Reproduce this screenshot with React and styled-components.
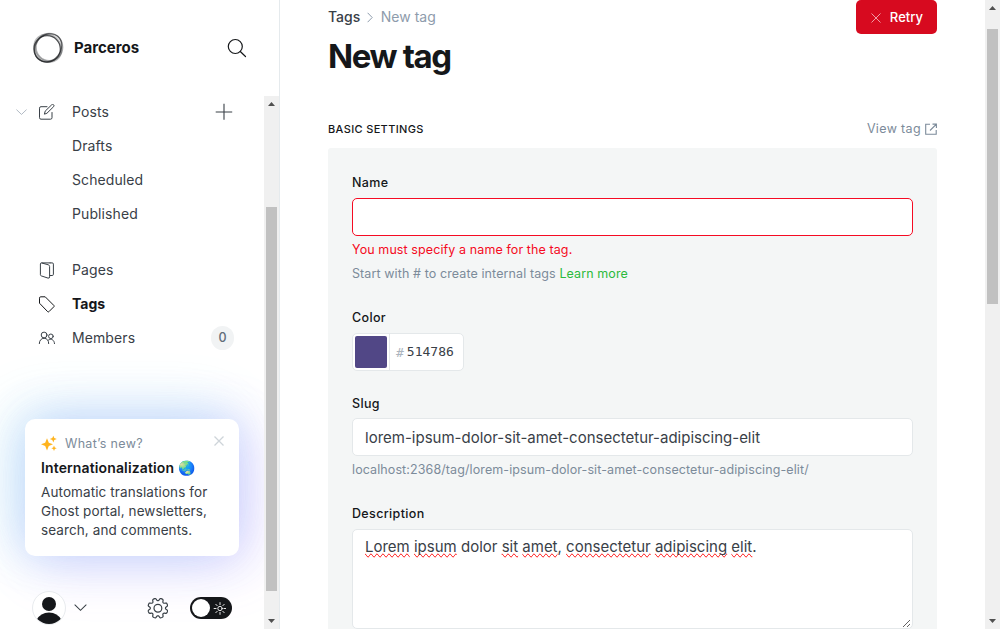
import React from 'react';
import styled, { createGlobalStyle } from 'styled-components';

const GlobalStyle = createGlobalStyle`
  *, *::before, *::after { box-sizing: border-box; }
  html, body, #root { height: 100%; }
  body {
    margin: 0;
    overflow: hidden;
    background: #fff;
    color: #15171a;
    font-family: Inter, "Liberation Sans", sans-serif;
    font-size: 14px;
    line-height: 20px;
  }
  svg { display: block; flex: none; }
`;

const Shell = styled.div`
  display: flex;
  width: 1000px;
  height: 629px;
  overflow: hidden;
`;

/* Scrollbars */
const Track = styled.div`
  flex: none;
  width: 15px;
  display: flex;
  flex-direction: column;
  background: #f0f0f0;
`;
const Arrow = styled.div`
  height: ${(p) => p.$h}px;
  flex: none;
  display: flex;
  align-items: center;
  justify-content: center;
`;
const Lane = styled.div`
  flex: 1;
  padding: ${(p) => p.$before}px 2px ${(p) => p.$after}px;
`;
const Thumb = styled.div`
  height: 100%;
  background: #c1c1c1;
`;

function Scrollbar({ before, after }) {
  return (
    <Track>
      <Arrow $h={16}>
        <svg width="7" height="4" viewBox="0 0 7 4"><path d="M0 4 3.500 0 7 4z" fill="#505050" /></svg>
      </Arrow>
      <Lane $before={before} $after={after}><Thumb /></Lane>
      <Arrow $h={16}>
        <svg width="7" height="4" viewBox="0 0 7 4"><path d="M0 0 3.500 4 7 0z" fill="#505050" /></svg>
      </Arrow>
    </Track>
  );
}

/* Sidebar */
const Sidebar = styled.aside`
  width: 280px;
  flex: none;
  display: flex;
  flex-direction: column;
  border-right: 1px solid #e5eaed;
`;
const SiteHeader = styled.header`
  height: 96px;
  flex: none;
  display: flex;
  align-items: center;
  padding: 0 32px 0 32px;
`;
const SiteName = styled.div`
  flex: 1;
  margin-left: 10px;
  font-size: 15px;
  font-weight: 700;
`;
const SidebarBody = styled.div`
  flex: 1;
  min-height: 0;
  display: flex;
`;
const NavColumn = styled.div`
  flex: 1;
  min-width: 0;
  display: flex;
  flex-direction: column;
  overflow: hidden;
`;
const NavList = styled.nav`
  display: flex;
  flex-direction: column;
  margin-top: ${(p) => p.$top}px;
  padding: 0 31px 0 16px;
`;
const NavItem = styled.a`
  height: 34px;
  display: grid;
  grid-template-columns: 22px 34px 1fr auto;
  align-items: center;
  font-size: 14px;
  letter-spacing: ${(p) => (p.$active ? '0' : '0.1px')};
  font-weight: ${(p) => (p.$active ? 700 : 400)};
  color: ${(p) => (p.$active ? '#15171a' : '#394047')};
`;
const Count = styled.span`
  width: 23px;
  height: 24px;
  margin-right: -1px;
  border-radius: 12px;
  background: #f1f3f4;
  color: #626d79;
  font-size: 12.5px;
  font-weight: 500;
  line-height: 24px;
  text-align: center;
  letter-spacing: 0;
`;

/* Announcement card */
const Toast = styled.section`
  flex: none;
  width: 214px;
  height: 137px;
  margin: auto 0 0 25px;
  padding: 14px 16px;
  border-radius: 10px;
  background: #fff;
  box-shadow:
    -12px -8px 60px 0 rgba(75, 225, 226, 0.2),
    12px 8px 60px 0 rgba(202, 103, 255, 0.2),
    0 0 46px 0 rgba(65, 120, 255, 0.21);
`;
const ToastTop = styled.div`
  display: flex;
  align-items: center;
  height: 20px;
  font-size: 12.5px;
  letter-spacing: 0.33px;
  color: #7c8b9a;
`;
const ToastLabel = styled.span`
  flex: 1;
  margin: 1px 0 0 8px;
`;
const ToastClose = styled.span`
  margin: -5px -1px 0 0;
`;
const ToastTitle = styled.h3`
  margin: 5px 0 4px;
  display: flex;
  gap: 4px;
  font-size: 14px;
  font-weight: 600;
  line-height: 20px;
  letter-spacing: 0.13px;
`;
const ToastText = styled.p`
  margin: 5px -4px 0 0;
  font-size: 13.5px;
  line-height: 19px;
  letter-spacing: 0.1px;
  color: #394047;
`;

const SidebarFooter = styled.footer`
  flex: none;
  height: 73px;
  display: flex;
  align-items: center;
  gap: 8px;
  padding: 31px 32px 0 32px;
`;
const Avatar = styled.div`
  width: 34px;
  height: 34px;
  border: 1px solid #e8ebee;
  border-radius: 50%;
  background: #fff;
  overflow: hidden;
`;
const FooterTools = styled.div`
  flex: 1;
  display: flex;
  justify-content: flex-end;
  align-items: center;
  gap: 22px;
`;
const Toggle = styled.div`
  width: 42px;
  height: 22px;
  padding: 2px 6px 2px 2px;
  border-radius: 11px;
  background: #15171a;
  display: flex;
  align-items: center;
  justify-content: space-between;
`;
const Knob = styled.div`
  width: 18px;
  height: 18px;
  border-radius: 50%;
  background: #fff;
`;

/* Main */
const Main = styled.main`
  flex: 1;
  min-width: 0;
  padding: 0 48px;
  overflow: hidden;
`;
const PageHeader = styled.header`
  display: flex;
  justify-content: space-between;
  align-items: flex-start;
  height: 119px;
`;
const Crumbs = styled.div`
  display: flex;
  align-items: center;
  height: 34px;
  font-size: 14px;
  font-weight: 500;
  color: #394047;
`;
const CrumbCurrent = styled.span`
  color: #8e9cac;
  font-weight: 400;
`;
const CrumbSep = styled.span`
  margin: 1px 7.5px 0 7px;
`;
const Title = styled.h1`
  margin: 1px 0 0;
  font-size: 33px;
  line-height: 42px;
  font-weight: 700;
  letter-spacing: -1.4px;
`;
const RetryButton = styled.button`
  width: 81px;
  height: 34px;
  padding: 0;
  border: 0;
  border-radius: 5px;
  background: #d70a1f;
  color: #fff;
  display: flex;
  align-items: center;
  justify-content: center;
  gap: 9px;
  padding: 1px 0 0 1px;
  font: 500 13px/33px Inter, sans-serif;
  letter-spacing: 0.05px;
`;
const SectionHead = styled.div`
  display: flex;
  justify-content: space-between;
  align-items: center;
  height: 20px;
  margin-bottom: 9px;
`;
const SectionTitle = styled.h4`
  margin: 0;
  font-size: 11px;
  font-weight: 450;
  letter-spacing: 0.35px;
`;
const ViewLink = styled.a`
  display: flex;
  align-items: center;
  gap: 4px;
  color: #7c8b9a;
  font-size: 12.5px;
  line-height: 18px;
  margin-top: -1px;
  letter-spacing: 0.35px;
`;
const Panel = styled.div`
  height: 600px;
  padding: 24px;
  border-radius: 3px;
  background: #f4f6f6;
`;
const Field = styled.div`
  height: ${(p) => p.$h}px;
`;
const Label = styled.div`
  height: ${(p) => (p.$tight ? 25 : 26)}px;
  font-size: 12.5px;
  font-weight: 500;
  line-height: 21px;
  letter-spacing: 0.35px;
`;
const Box = styled.div`
  height: ${(p) => p.$h || 38}px;
  padding: 0 12px;
  border: 1px solid ${(p) => (p.$error ? '#f50b23' : '#e4e8ea')};
  border-radius: 5px;
  background: #fff;
  font-size: 15px;
  line-height: ${(p) => (p.$h ? 34 : 37)}px;
  color: #394047;
`;
const AreaBox = styled(Box)`
  display: flex;
  justify-content: space-between;
  padding-right: 1px;
`;
const Grip = styled.div`
  align-self: flex-end;
`;
const Misspelt = styled.span`
  text-decoration-line: spelling-error;
`;
const Hint = styled.p`
  margin: ${(p) => p.$top}px 0 0;
  font-size: 12.5px;
  line-height: 20px;
  letter-spacing: 0.1px;
  color: ${(p) => (p.$error ? '#f50b23' : '#7c8b9a')};
`;
const HintLink = styled.a`
  color: #2bba3c;
`;
const ColorBox = styled.div`
  width: 112px;
  height: 38px;
  display: flex;
  align-items: center;
  border: 1px solid #e4e8ea;
  border-radius: 5px;
  background: #fff;
`;
const SwatchCell = styled.div`
  width: 37px;
  height: 36px;
  padding: 2px;
  border-right: 1px solid #e4e8ea;
`;
const Swatch = styled.div`
  width: 32px;
  height: 32px;
  border-radius: 2px;
  background: #514786;
`;
const Hash = styled.span`
  margin: 1px 3px 0 6px;
  font: 13px/20px "DejaVu Sans Mono", monospace;
  color: #abb4be;
`;
const Hex = styled.span`
  font: 13px/20px "DejaVu Sans Mono", monospace;
  color: #394047;
`;

const Logo = () => (
  <svg width="32" height="32" viewBox="0 0 32 32" fill="none" stroke="#15171a">
    <circle cx="15.100" cy="16.900" r="13.200" strokeWidth="1.200" strokeOpacity=".7" />
    <ellipse cx="17.300" cy="15.200" rx="13.300" ry="13.600" strokeWidth="1.500" strokeOpacity=".35" />
    <ellipse cx="16.300" cy="16" rx="15" ry="12.500" strokeWidth="1.200" strokeOpacity=".6" transform="rotate(-50 16 16)" />
    <ellipse cx="16" cy="16.300" rx="14.400" ry="12.800" strokeWidth="2" strokeOpacity=".3" transform="rotate(50 16 16)" />
  </svg>
);

const SearchIcon = () => (
  <svg width="20" height="20" viewBox="0 0 20 20" fill="none" stroke="#15171a" strokeWidth="1.200" strokeLinecap="round">
    <circle cx="8.300" cy="8.500" r="7" /><path d="m13.300 13.500 5.200 5" />
  </svg>
);

const ChevronDown = ({ w, color, sw = 1 }) => (
  <svg width={w} height={w / 2 + 1} viewBox="0 0 12 7" fill="none" stroke={color} strokeWidth={sw} strokeLinecap="round">
    <path d="m.8.9 5.200 5 5.200-5" />
  </svg>
);

const PencilIcon = () => (
  <svg width="17" height="17" viewBox="0 0 17 17" fill="none" stroke="#394047" strokeLinejoin="round" strokeLinecap="round">
    <path d="M9 2.700H3A1.500 1.500 0 0 0 1.500 4.200v9.500A1.500 1.500 0 0 0 3 15.200h9.500a1.500 1.500 0 0 0 1.500-1.500V8.500" />
    <path d="m6.500 9.800.7-2.700L13.700.8a1.200 1.200 0 0 1 1.900 1.900L9.200 9z" />
  </svg>
);

const PlusIcon = () => (
  <svg width="18" height="18" viewBox="0 0 18 18" stroke="#394047" strokeWidth="1.100"><path d="M9 .8v16M.7 9h16.500" /></svg>
);

const PagesIcon = () => (
  <svg width="17" height="17" viewBox="0 0 17 17" fill="none" stroke="#394047" strokeLinejoin="round">
    <path d="M3.500.9h9M3.500.9Q2.400.9 2.400 2v10.700q0 .9.9 1.200l6.700 2.200q1.600.4 1.600-1.200V4.500q0-1.300-1.300-1.700L3.500.9M11.700.9h2.500q1.200 0 1.200 1.200v10.200q0 1.200-1.200 1.200h-2.500" />
  </svg>
);

const TagIcon = () => (
  <svg width="17" height="17" viewBox="0 0 17 17" fill="none" stroke="#15171a" strokeLinejoin="round">
    <path d="M1.500 2.200Q1.500.8 2.700.8H7.200L15.900 9.500Q16.500 10.100 15.900 10.700L10.900 15.700Q10.300 16.300 9.700 15.700L1.500 7.200z" />
  </svg>
);

const MembersIcon = () => (
  <svg width="17" height="14" viewBox="0 0 17 14" fill="none" stroke="#394047" strokeLinecap="round">
    <circle cx="6.100" cy="4" r="2.900" /><circle cx="12.900" cy="5.300" r="2.300" />
    <path d="M1.300 12.600c0-3.200 2-5.300 4.800-5.300s4.600 2 4.600 5.300M10.500 9c2.700-1.800 5.800-.2 6 3.600" />
  </svg>
);

const Sparkles = () => (
  <svg width="16" height="16" viewBox="0 0 16 16" fill="#ffb41f">
    <path d="M6 3.300 7.800 7.700 12 9.300 7.800 11 6 15.500 4.200 11 0 9.300 4.200 7.700z" />
    <path d="m12.300.8 1 2.300 2.500 1-2.500 1-1 2.400-1-2.400-2.500-1 2.500-1z" />
    <path d="m13 10.600.8 1.900 1.900.8-1.900.8-.8 1.900-.8-1.900-1.900-.8 1.900-.8z" />
  </svg>
);

const Cross = ({ size, color, sw = 1 }) => (
  <svg width={size} height={size} viewBox="0 0 10 10" stroke={color} strokeWidth={sw}><path d="m.5.5 9 9M9.500.5l-9 9" /></svg>
);

const Person = () => (
  <svg width="32" height="32" viewBox="0 0 32 32" fill="#15171a">
    <circle cx="16" cy="12" r="7" />
    <path d="M3.500 28q4-7.500 12.500-7.500T28.500 28L24 33H8z" />
  </svg>
);

/* Eight-lobed outline with a notch at the top */
const gearPath = (() => {
  const steps = 96;
  const pts = [];
  for (let i = 0; i < steps; i += 1) {
    const a = (i / steps) * Math.PI * 2;
    const wave = Math.tanh(0.5 - 2.2 * Math.cos(8 * a));
    const r = 8.8 + 1.300 * wave;
    pts.push(`${(10.5 + r * Math.cos(a)).toFixed(2)} ${(10.5 + r * Math.sin(a)).toFixed(2)}`);
  }
  return `M${pts.join('L')}z`;
})();

const GearIcon = () => (
  <svg width="21" height="21" viewBox="0 0 21 21" fill="none" stroke="#394047" strokeWidth="1.200" strokeLinejoin="round">
    <circle cx="10.900" cy="10.200" r="3.900" />
    <path d={gearPath} transform="translate(.4 -.3)" />
  </svg>
);

const SunIcon = () => (
  <svg width="13" height="13" viewBox="0 0 13 13" fill="none" stroke="#fff" strokeWidth=".9" strokeLinecap="round">
    <circle cx="7" cy="6.500" r="2.200" />
    <path d="M7 .6v2M7 10.400v2M1.100 6.500h2M10.900 6.500h1.900M2.800 2.300l1.400 1.400M9.800 9.300l1.400 1.400M2.800 10.700l1.400-1.400M9.800 3.700l1.400-1.400" />
  </svg>
);

const ExternalIcon = () => (
  <svg width="12" height="12" viewBox="0 0 12 12" fill="none" stroke="#7c8b9a" strokeWidth="1.100">
    <path d="M5 1.300H.7v10h10.500V7M7.500 1.100h3.900v4M11.200 1.300 5 7.500" />
  </svg>
);

export default function App() {
  return (
    <>
      <GlobalStyle />
      <Shell>
        <Sidebar>
          <SiteHeader>
            <Logo />
            <SiteName>Parceros</SiteName>
            <SearchIcon />
          </SiteHeader>
          <SidebarBody>
            <NavColumn>
              <NavList $top={-1}>
                <NavItem><ChevronDown w={11} color="#abb4be" /><PencilIcon /><span>Posts</span><PlusIcon /></NavItem>
                <NavItem><i /><i /><span>Drafts</span></NavItem>
                <NavItem><i /><i /><span>Scheduled</span></NavItem>
                <NavItem><i /><i /><span>Published</span></NavItem>
              </NavList>
              <NavList $top={22}>
                <NavItem><i /><PagesIcon /><span>Pages</span></NavItem>
                <NavItem $active><i /><TagIcon /><span>Tags</span></NavItem>
                <NavItem><i /><MembersIcon /><span>Members</span><Count>0</Count></NavItem>
              </NavList>
              <Toast>
                <ToastTop>
                  <Sparkles />
                  <ToastLabel>What’s new?</ToastLabel>
                  <ToastClose><Cross size={10} color="#ced4d9" sw={1.3} /></ToastClose>
                </ToastTop>
                <ToastTitle>Internationalization <span>🌏</span></ToastTitle>
                <ToastText>Automatic translations for Ghost portal, newsletters, search, and comments.</ToastText>
              </Toast>
              <SidebarFooter>
                <Avatar><Person /></Avatar>
                <ChevronDown w={13} color="#394047" />
                <FooterTools>
                  <GearIcon />
                  <Toggle><Knob /><SunIcon /></Toggle>
                </FooterTools>
              </SidebarFooter>
            </NavColumn>
            <Scrollbar before={95} after={22} />
          </SidebarBody>
        </Sidebar>
        <Main>
          <PageHeader>
            <div>
              <Crumbs>
                <span>Tags</span>
                <CrumbSep>
                  <svg width="6" height="11" viewBox="0 0 6 11" fill="none" stroke="#8e9cac"><path d="m.6.8 4.600 4.700L.6 10.200" /></svg>
                </CrumbSep>
                <CrumbCurrent>New tag</CrumbCurrent>
              </Crumbs>
              <Title>New tag</Title>
            </div>
            <RetryButton><Cross size={10} color="#fff" sw={0.6} />Retry</RetryButton>
          </PageHeader>
          <SectionHead>
            <SectionTitle>BASIC SETTINGS</SectionTitle>
            <ViewLink>View tag<ExternalIcon /></ViewLink>
          </SectionHead>
          <Panel>
            <Field $h={135}>
              <Label>Name</Label>
              <Box $error />
              <Hint $error $top={4}>You must specify a name for the tag.</Hint>
              <Hint $top={4}>Start with # to create internal tags <HintLink>Learn more</HintLink></Hint>
            </Field>
            <Field $h={86}>
              <Label>Color</Label>
              <ColorBox>
                <SwatchCell><Swatch /></SwatchCell>
                <Hash>#</Hash><Hex>514786</Hex>
              </ColorBox>
            </Field>
            <Field $h={110}>
              <Label $tight>Slug</Label>
              <Box>lorem-ipsum-dolor-sit-amet-consectetur-adipiscing-elit</Box>
              <Hint $top={4}>localhost:2368/tag/lorem-ipsum-dolor-sit-amet-consectetur-adipiscing-elit/</Hint>
            </Field>
            <Field $h={130}>
              <Label>Description</Label>
              <AreaBox $h={100}>
                <div>
                  <Misspelt>Lorem</Misspelt> <Misspelt>ipsum</Misspelt> dolor <Misspelt>sit</Misspelt>{' '}
                  <Misspelt>amet</Misspelt>, <Misspelt>consectetur</Misspelt>{' '}
                  <Misspelt>adipiscing</Misspelt> <Misspelt>elit</Misspelt>.
                </div>
                <Grip>
                  <svg width="9" height="9" viewBox="0 0 9 9" stroke="#505050" strokeWidth=".9"><path d="m1 8 7-7M5 8l3-3" /></svg>
                </Grip>
              </AreaBox>
            </Field>
          </Panel>
        </Main>
        <Scrollbar before={13} after={309} />
      </Shell>
    </>
  );
}
